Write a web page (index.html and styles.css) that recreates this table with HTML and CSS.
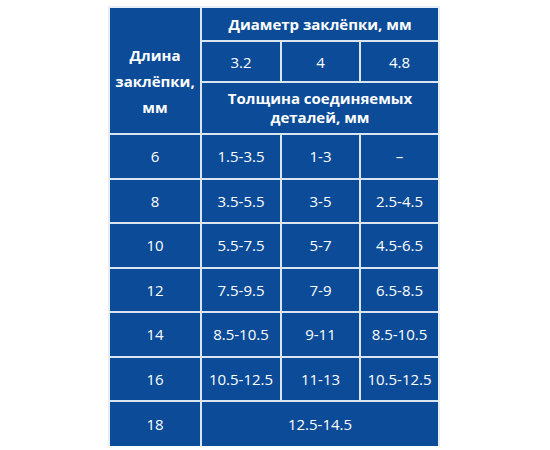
FILE: index.html
```html
<!DOCTYPE html>
<html lang="ru">
<head>
<meta charset="utf-8">
<title>Таблица заклёпок</title>
<link rel="stylesheet" href="styles.css">
</head>
<body>
<div class="page">
  <table class="rivets">
    <colgroup>
      <col class="c1"><col class="c2"><col class="c3"><col class="c4">
    </colgroup>
    <thead>
      <tr class="h1">
        <th rowspan="3" class="len">Длина<br>заклёпки,<br>мм</th>
        <th colspan="3">Диаметр заклёпки, мм</th>
      </tr>
      <tr class="h2">
        <td>3.2</td><td>4</td><td>4.8</td>
      </tr>
      <tr class="h3">
        <th colspan="3" class="thick">Толщина соединяемых<br>деталей, мм</th>
      </tr>
    </thead>
    <tbody>
      <tr><td>6</td><td>1.5-3.5</td><td>1-3</td><td>–</td></tr>
      <tr><td>8</td><td>3.5-5.5</td><td>3-5</td><td>2.5-4.5</td></tr>
      <tr><td>10</td><td>5.5-7.5</td><td>5-7</td><td>4.5-6.5</td></tr>
      <tr><td>12</td><td>7.5-9.5</td><td>7-9</td><td>6.5-8.5</td></tr>
      <tr><td>14</td><td>8.5-10.5</td><td>9-11</td><td>8.5-10.5</td></tr>
      <tr><td>16</td><td>10.5-12.5</td><td>11-13</td><td>10.5-12.5</td></tr>
      <tr><td>18</td><td colspan="3">12.5-14.5</td></tr>
    </tbody>
  </table>
</div>
</body>
</html>
```
FILE: styles.css
```css
html, body {
  margin: 0;
  padding: 0;
  background: #ffffff;
}
.page {
  padding: 8px 0 0 110px;
}
.rivets {
  border-collapse: collapse;
  border-style: hidden;
  table-layout: fixed;
  width: 328px;
  background: #0b4b98;
  color: #ffffff;
  font-family: "Open Sans", "Noto Sans", sans-serif;
  font-size: 15px;
  box-shadow: 0 0 0 2px #e6eef7;
}
.c1 { width: 91px; }
.c2 { width: 80px; }
.c3 { width: 79px; }
.c4 { width: 78px; }
.rivets th,
.rivets td {
  border: 2px solid #d9e5f3;
  padding: 0;
  text-align: center;
  vertical-align: middle;
}
.rivets th {
  font-weight: 700;
  font-size: 15px;
}
.h1 { height: 33px; }
.h2 { height: 41px; }
.h3 { height: 52px; }
.rivets th.len {
  line-height: 26px;
  vertical-align: top;
  padding-top: 34px;
}
.thick {
  line-height: 19px;
}
.rivets tbody tr {
  height: 44.5px;
}
```
